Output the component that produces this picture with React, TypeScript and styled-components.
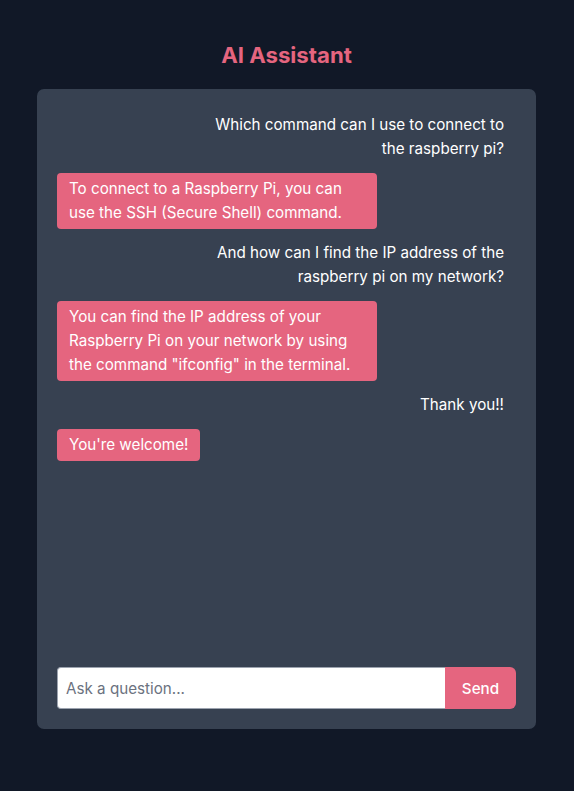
import React from "react";
import styled, { createGlobalStyle } from "styled-components";

const GlobalStyle = createGlobalStyle`
  * { box-sizing: border-box; }
  html, body { margin: 0; padding: 0; background: #111827; }
  body {
    font-family: Inter, "Noto Sans", "Liberation Sans", sans-serif;
    color: #ffffff;
    -webkit-font-smoothing: antialiased;
  }
`;

const PINK = "#e5657f";

const Page = styled.main`
  min-height: 791px;
  display: flex;
  flex-direction: column;
  align-items: flex-start;
  padding: 39px 38px 0 37px;
`;

const Title = styled.h1`
  align-self: center;
  margin: 0 0 18px;
  font-size: 22.2px;
  line-height: 32px;
  font-weight: 700;
  color: ${PINK};
`;

const Card = styled.section`
  width: 499px;
  height: 640px;
  background: #374151;
  border-radius: 7px;
  padding: 20px;
  display: flex;
  flex-direction: column;
`;

const Messages = styled.div`
  flex: 1;
  display: flex;
  flex-direction: column;
  gap: 8px;
  overflow-y: auto;
`;

const Bubble = styled.div<{ $fromUser: boolean; $fit?: boolean }>`
  max-width: 320px;
  padding: 4px 12px;
  font-size: 15.2px;
  line-height: 24px;
  border-radius: 4px;
  color: #ffffff;
  align-self: ${(p) => (p.$fromUser ? "flex-end" : "flex-start")};
  text-align: ${(p) => (p.$fromUser ? "right" : "left")};
  background: ${(p) => (p.$fromUser ? "transparent" : PINK)};
  width: ${(p) => (p.$fromUser || p.$fit ? "auto" : "320px")};
`;

const Form = styled.form`
  display: flex;
  height: 42px;
  margin-top: 16px;
`;

const Input = styled.input`
  flex: 1;
  min-width: 0;
  border: 1px solid #9ca3af;
  border-right: none;
  border-radius: 4px 0 0 4px;
  background: #ffffff;
  padding: 0 8px;
  font-family: inherit;
  font-size: 15.2px;
  color: #111827;
  outline: none;
  &::placeholder { color: #6b7280; }
`;

const SendButton = styled.button`
  width: 71px;
  border: none;
  border-radius: 0 6px 6px 0;
  background: ${PINK};
  color: #ffffff;
  font-family: inherit;
  font-size: 15.2px;
  font-weight: 500;
  cursor: pointer;
`;

type Msg = { user: boolean; text: string; fit?: boolean };

const messages: Msg[] = [
  { user: true, text: "Which command can I use to connect to the raspberry pi?" },
  { user: false, text: "To connect to a Raspberry Pi, you can use the SSH (Secure Shell) command." },
  { user: true, text: "And how can I find the IP address of the raspberry pi on my network?" },
  {
    user: false,
    text: 'You can find the IP address of your Raspberry Pi on your network by using the command "ifconfig" in the terminal.',
  },
  { user: true, text: "Thank you!!" },
  { user: false, text: "You're welcome!", fit: true },
];

export default function App() {
  return (
    <>
      <GlobalStyle />
      <Page>
        <Title>AI Assistant</Title>
        <Card>
          <Messages>
            {messages.map((m, i) => (
              <Bubble key={i} $fromUser={m.user} $fit={m.fit}>
                {m.text}
              </Bubble>
            ))}
          </Messages>
          <Form onSubmit={(e) => e.preventDefault()}>
            <Input placeholder="Ask a question..." />
            <SendButton type="submit">Send</SendButton>
          </Form>
        </Card>
      </Page>
    </>
  );
}
